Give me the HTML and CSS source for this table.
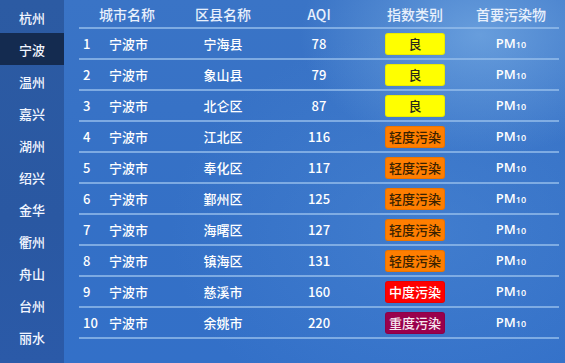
FILE: index.html
```html
<!DOCTYPE html>
<html lang="zh">
<head>
<meta charset="utf-8">
<link rel="stylesheet" href="styles.css">
</head>
<body>
<div class="app">
  <nav class="side">
    <div class="city">杭州</div>
    <div class="city active">宁波</div>
    <div class="city">温州</div>
    <div class="city">嘉兴</div>
    <div class="city">湖州</div>
    <div class="city">绍兴</div>
    <div class="city">金华</div>
    <div class="city">衢州</div>
    <div class="city">舟山</div>
    <div class="city">台州</div>
    <div class="city">丽水</div>
  </nav>
  <main class="main">
    <div class="table">
      <div class="row head">
        <div class="c span2">城市名称</div>
        <div class="c">区县名称</div>
        <div class="c">AQI</div>
        <div class="c">指数类别</div>
        <div class="c">首要污染物</div>
      </div>
      <div class="row"><div class="num">1</div><div class="name">宁波市</div><div class="c">宁海县</div><div class="c">78</div><div class="c"><span class="badge good">良</span></div><div class="c pm">PM<sub>10</sub></div></div>
      <div class="row"><div class="num">2</div><div class="name">宁波市</div><div class="c">象山县</div><div class="c">79</div><div class="c"><span class="badge good">良</span></div><div class="c pm">PM<sub>10</sub></div></div>
      <div class="row"><div class="num">3</div><div class="name">宁波市</div><div class="c">北仑区</div><div class="c">87</div><div class="c"><span class="badge good">良</span></div><div class="c pm">PM<sub>10</sub></div></div>
      <div class="row"><div class="num">4</div><div class="name">宁波市</div><div class="c">江北区</div><div class="c">116</div><div class="c"><span class="badge light">轻度污染</span></div><div class="c pm">PM<sub>10</sub></div></div>
      <div class="row"><div class="num">5</div><div class="name">宁波市</div><div class="c">奉化区</div><div class="c">117</div><div class="c"><span class="badge light">轻度污染</span></div><div class="c pm">PM<sub>10</sub></div></div>
      <div class="row"><div class="num">6</div><div class="name">宁波市</div><div class="c">鄞州区</div><div class="c">125</div><div class="c"><span class="badge light">轻度污染</span></div><div class="c pm">PM<sub>10</sub></div></div>
      <div class="row"><div class="num">7</div><div class="name">宁波市</div><div class="c">海曙区</div><div class="c">127</div><div class="c"><span class="badge light">轻度污染</span></div><div class="c pm">PM<sub>10</sub></div></div>
      <div class="row"><div class="num">8</div><div class="name">宁波市</div><div class="c">镇海区</div><div class="c">131</div><div class="c"><span class="badge light">轻度污染</span></div><div class="c pm">PM<sub>10</sub></div></div>
      <div class="row"><div class="num">9</div><div class="name">宁波市</div><div class="c">慈溪市</div><div class="c">160</div><div class="c"><span class="badge mid">中度污染</span></div><div class="c pm">PM<sub>10</sub></div></div>
      <div class="row"><div class="num">10</div><div class="name">宁波市</div><div class="c">余姚市</div><div class="c">220</div><div class="c"><span class="badge heavy">重度污染</span></div><div class="c pm">PM<sub>10</sub></div></div>
    </div>
  </main>
</div>
</body>
</html>
```

FILE: styles.css
```css
* { box-sizing: border-box; }
html, body {
  margin: 0;
  padding: 0;
  width: 565px;
  height: 363px;
  overflow: hidden;
}
body {
  font-family: "Noto Sans CJK SC", "Noto Sans", sans-serif;
  font-weight: 500;
  color: #ffffff;
}
.app {
  display: flex;
  width: 565px;
  height: 363px;
  background:
    radial-gradient(ellipse 180px 120px at 480px 35px, rgba(115, 168, 226, 0.8), rgba(115, 168, 226, 0) 100%),
    radial-gradient(ellipse 260px 200px at 430px 230px, rgba(80, 140, 215, 0.45), rgba(80, 140, 215, 0) 100%),
    linear-gradient(180deg, #3a74c6 0%, #3470c6 60%, #3370c8 100%);
}
.side {
  width: 64px;
  flex: none;
  padding-top: 1px;
  background: linear-gradient(180deg, #2c5ba3 0%, #2a58a2 60%, #2b5aa8 100%);
}
.city {
  height: 32px;
  display: flex;
  align-items: center;
  justify-content: center;
  font-size: 13px;
  color: #f2f6ff;
}
.city.active {
  background: #142b50;
}
.main {
  flex: 1;
  padding: 0 7px 0 15px;
}
.table {
  display: flex;
  flex-direction: column;
}
.row {
  display: grid;
  grid-template-columns: 30px 66px 96px 96px 96px 96px;
  height: 31px;
  align-items: center;
  border-bottom: 2px solid rgba(150, 190, 235, 0.75);
  font-size: 13px;
}
.row.head {
  height: 29px;
  font-size: 14px;
  color: #e8f0fc;
}
.span2 { grid-column: span 2; }
.c {
  text-align: center;
  line-height: 20px;
}
.num {
  padding-left: 4px;
  line-height: 20px;
}
.name {
  line-height: 20px;
}
.badge {
  display: inline-flex;
  align-items: center;
  justify-content: center;
  width: 60px;
  height: 22px;
  border-radius: 3px;
  font-size: 13px;
  vertical-align: middle;
  border: 1px solid rgba(0, 0, 0, 0.08);
}
.good { background: #ffff00; color: #2a2a1a; }
.light { background: #ff7e00; color: #3a2200; }
.mid { background: #ff0000; color: #ffffff; }
.heavy { background: #99004c; color: #f6e6ee; }
.pm {
  font-family: "Open Sans", "Noto Sans", sans-serif;
  font-weight: 600;
  font-size: 13px;
}
.pm sub {
  font-size: 9px;
  vertical-align: baseline;
  position: relative;
  top: 0;
}
```
